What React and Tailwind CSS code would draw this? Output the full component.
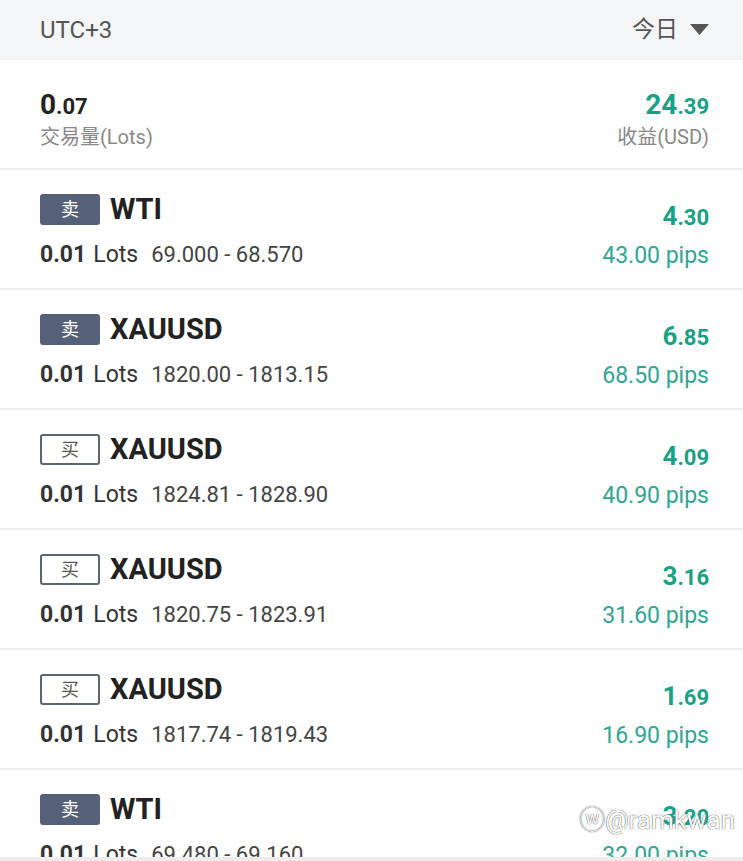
import React from 'react';

const trades = [
  { side: 'sell', symbol: 'WTI', range: '69.000 - 68.570', big: '4', small: '.30', pips: '43.00 pips' },
  { side: 'sell', symbol: 'XAUUSD', range: '1820.00 - 1813.15', big: '6', small: '.85', pips: '68.50 pips' },
  { side: 'buy', symbol: 'XAUUSD', range: '1824.81 - 1828.90', big: '4', small: '.09', pips: '40.90 pips' },
  { side: 'buy', symbol: 'XAUUSD', range: '1820.75 - 1823.91', big: '3', small: '.16', pips: '31.60 pips' },
  { side: 'buy', symbol: 'XAUUSD', range: '1817.74 - 1819.43', big: '1', small: '.69', pips: '16.90 pips' },
  { side: 'sell', symbol: 'WTI', range: '69.480 - 69.160', big: '3', small: '.20', pips: '32.00 pips' },
];

function Badge({ side }) {
  if (side === 'sell') {
    return (
      <span className="w-[60px] h-[31px] rounded-[3px] bg-[#566179] text-white text-[18px] flex items-center justify-center">
        卖
      </span>
    );
  }
  return (
    <span className="w-[60px] h-[31px] rounded-[3px] border-2 border-[#5d6573] text-[#555] text-[18px] flex items-center justify-center">
      买
    </span>
  );
}

function TradeRow({ t }) {
  return (
    <div className="h-[120px] border-b-2 border-[#efefef] pl-10 pr-[34px] pt-[24px] flex justify-between">
      <div>
        <div className="flex items-center gap-[10px]">
          <Badge side={t.side} />
          <span className="text-[29px] font-bold text-[#222] leading-none">{t.symbol}</span>
        </div>
        <div className="mt-[18px] text-[23px] leading-none text-[#333] flex items-baseline">
          <span className="font-bold">0.01</span>
          <span className="ml-[7px]">Lots</span>
          <span className="ml-[13px] text-[22px] text-[#444]">{t.range}</span>
        </div>
      </div>
      <div className="flex flex-col items-end">
        <div className="mt-[9px] font-bold text-[#17a285] leading-none">
          <span className="text-[26px]">{t.big}</span>
          <span className="text-[22px]">{t.small}</span>
        </div>
        <div className="mt-[15px] text-[23px] leading-none text-[#2fa692]">{t.pips}</div>
      </div>
    </div>
  );
}

export default function App() {
  return (
    <div
      className="w-[743px] h-[861px] overflow-hidden bg-white relative"
      style={{ fontFamily: 'Roboto, "Noto Sans CJK SC", sans-serif' }}
    >
      {/* Header */}
      <div className="h-[60px] bg-[#f4f5f7] pl-10 pr-[34px] flex items-center justify-between">
        <span className="text-[24px] text-[#555]">UTC+3</span>
        <div className="flex items-center gap-[12px] text-[23px] text-[#555]">
          <span>今日</span>
          <svg width="19" height="12" viewBox="0 0 19 12">
            <path d="M0 0H19L9.5 11Z" fill="#555" />
          </svg>
        </div>
      </div>

      {/* Summary */}
      <div className="h-[110px] border-b-2 border-[#efefef] pl-10 pr-[34px] pt-[31px] flex justify-between">
        <div>
          <div className="font-bold text-[#222] leading-none">
            <span className="text-[28px]">0</span>
            <span className="text-[22px]">.07</span>
          </div>
          <div className="mt-[8px] text-[20px] text-[#888] leading-none">交易量(Lots)</div>
        </div>
        <div className="flex flex-col items-end">
          <div className="font-bold text-[#17a285] leading-none">
            <span className="text-[28px]">24</span>
            <span className="text-[22px]">.39</span>
          </div>
          <div className="mt-[8px] text-[20px] text-[#888] leading-none">收益(USD)</div>
        </div>
      </div>

      {trades.map((t, i) => (
        <TradeRow key={i} t={t} />
      ))}

      {/* bottom bar */}
      <div className="absolute left-0 right-0 bottom-0 h-[4px] bg-[#ececec]" />

      {/* watermark */}
      <div
        className="absolute right-[8px] bottom-[28px] text-[26px] text-white leading-none"
        style={{ textShadow: '0 0 1px #555, 0 0 1px #555' }}
      >
        ⓦ@ramkwan
      </div>
    </div>
  );
}
